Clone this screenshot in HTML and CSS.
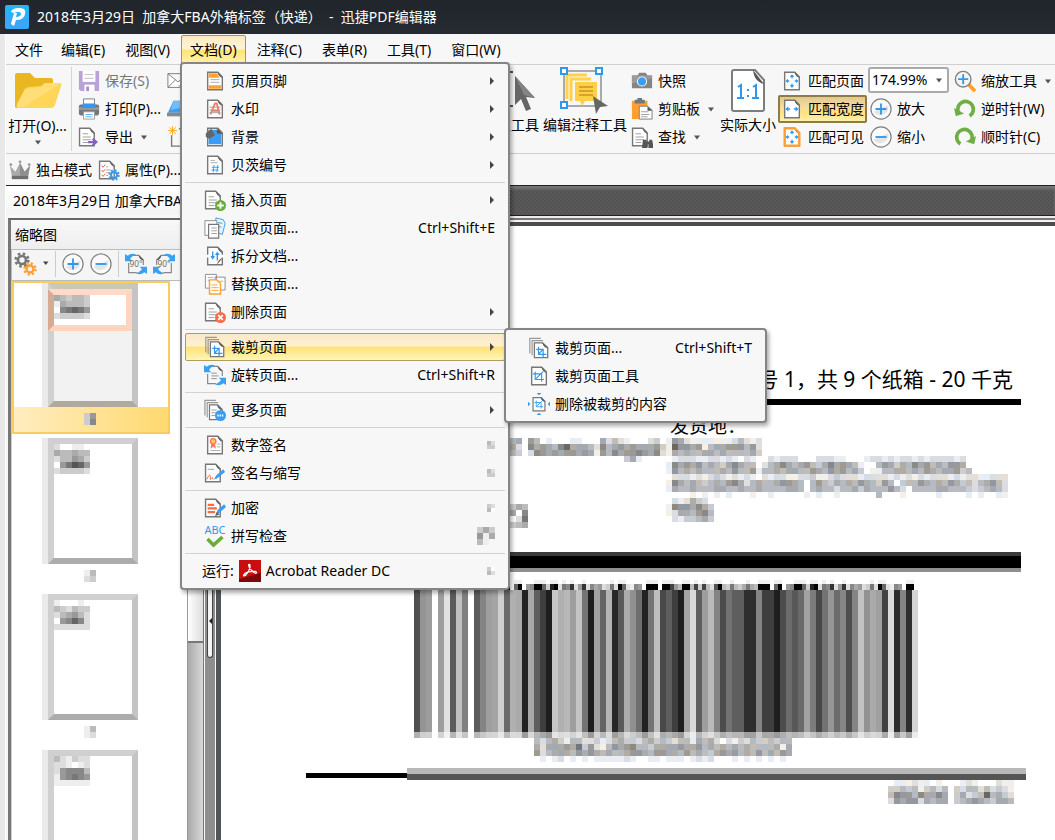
FILE: index.html
```html
<!DOCTYPE html>
<html lang="zh-CN">
<head>
<meta charset="utf-8">
<title>迅捷PDF编辑器</title>
<link rel="stylesheet" href="styles.css">
</head>
<body>
<svg class="defs" aria-hidden="true">
  <symbol id="page" viewBox="0 0 24 24"><path d="M4 2.500h11l5 5v14H4z" fill="#fff" stroke="#777" stroke-width="1.500"/><path d="M14.500 2l6 7c-3-1-5-3-6-7z" fill="#555"/></symbol>
  <symbol id="pageL" viewBox="0 0 24 24"><path d="M1.700 2.500h11l5 5v14h-16z" fill="#fff" stroke="#777" stroke-width="1.500"/><path d="M12.500 2l6 7c-3-1-5-3-6-7z" fill="#555"/><path d="M5 8.500h6M5 12h9M5 15h9M5 18h6" stroke="#999" fill="none"/></symbol>
  <symbol id="cropmark" viewBox="0 0 24 24"><path d="M9 8v10h11M6 11h11v10M10 17l9-9" stroke="#2f98ee" stroke-width="1.400" fill="none"/></symbol>
  <symbol id="croppages" viewBox="0 0 24 24"><path d="M2 18V1.500h12M4.500 20V4h12" fill="none" stroke="#999" stroke-width="1.300"/><path d="M7 6.500h9l5.500 5v11H7z" fill="#fff" stroke="#777" stroke-width="1.400"/><path d="M15.500 6l6 6c-3 0-5-2-6-6z" fill="#555"/><path d="M11.500 10.500v8.500H20M9 13.500h7.500V22M11.500 18.500l5-5" stroke="#2f98ee" stroke-width="1.300" fill="none"/></symbol>
  <symbol id="plus" viewBox="0 0 24 24"><circle cx="12" cy="12" r="11" fill="#fafafa" stroke="#808080" stroke-width="1.300"/><path d="M4 15a9 9 0 0 0 16-7z" fill="#e4e4e4"/><path d="M12 6v12M6 12h12" stroke="#2f98ee" stroke-width="2"/></symbol>
  <symbol id="minus" viewBox="0 0 24 24"><circle cx="12" cy="12" r="11" fill="#fafafa" stroke="#808080" stroke-width="1.300"/><path d="M4 15a9 9 0 0 0 16-7z" fill="#e4e4e4"/><path d="M6 12h12" stroke="#2f98ee" stroke-width="2"/></symbol>
  <symbol id="arrows4" viewBox="0 0 24 24"><path d="M12 9V6M12 15v3M9 12H6M15 12h3" stroke="#2f98ee" stroke-width="1.500"/><path d="M9.500 7.500L12 4.500l2.500 3zM9.500 16.500l2.500 3 2.500-3zM7.500 9.500v5L5 12zM16.500 9.500v5L19 12z" fill="#2f98ee"/></symbol>
  <symbol id="gear" viewBox="0 0 24 24"><circle cx="12" cy="12" r="6" fill="none" stroke="currentColor" stroke-width="4"/><circle cx="12" cy="12" r="9.500" fill="none" stroke="currentColor" stroke-width="4" stroke-dasharray="3.730 3.730"/></symbol>
  <symbol id="turn" viewBox="0 0 24 24"><path d="M5 16A8.500 8.500 0 1 1 17 19.500" fill="none" stroke="#6fae45" stroke-width="4"/><path d="M0 11l2 9 9-3z" fill="#6fae45"/></symbol>
  <symbol id="caret" viewBox="0 0 8 5"><path d="M1 .5h6L4 4.500z" fill="#555"/></symbol>
  <symbol id="next" viewBox="0 0 6 10"><path d="M1 1l4 4-4 4z" fill="#444"/></symbol>
  <symbol id="rot" viewBox="0 0 24 24"><path d="M4 11v10.500h9M9 2.500h6l5 5V13" fill="none" stroke="#888" stroke-width="1.300"/><path d="M14.500 2l6 6c-3 0-5-2-6-6z" fill="#555"/><path d="M0 1v8h8L5.500 6.500C7 4 9 3 12 2 9 0 5 1 3 3zM24 23v-8h-8l2.500 2.500C17 20 15 21 12 22c3 2 7 1 9-1z" fill="#3aa0f2"/></symbol>
</svg>

<header class="titlebar">
  <svg class="logo" viewBox="0 0 24 24"><rect width="24" height="24" rx="2" fill="#27b2ff"/><path d="M0 12h24v10l-2 2H2l-2-2z" fill="#3aa8f5"/><path d="M6 7c1-3 4-4 8-4 5 0 7 2 6 6-1 5-5 6-9 6l-2 6-3-2 1-4 2-7h3l-1 4c3 0 5-1 5-3 0-3-5-2-7-1z" fill="#fff"/></svg>
  <h1>2018年3月29日&nbsp; 加拿大FBA外箱标签（快递）&nbsp; - &nbsp;迅捷PDF编辑器</h1>
</header>

<div class="window">
  <nav class="menubar">
    <button>文件</button><button>编辑(E)</button><button>视图(V)</button><button class="open">文档(D)</button><button>注释(C)</button><button>表单(R)</button><button>工具(T)</button><button>窗口(W)</button>
  </nav>

  <div class="toolbar">
    <button class="big folder">
      <svg width="48" height="38" viewBox="0 0 48 38"><path d="M1 3q0-2 2-2h13l5 5h16q2 0 2 2v10L4 36q-3 1-3-2z" fill="#e9b820"/><path d="M11 17q1-2 4-2l12-1 4-3h15q2 0 1 3l-6 19q-1 3-4 3H4q-2 0-1-3z" fill="#ffd65a"/><path d="M47 11L10 35H4q-2 0-1-3l8-15 16-2 4-4z" fill="#ffde78"/></svg>
      <span>打开(O)...</span><svg class="caret"><use href="#caret"/></svg>
    </button>
    <div class="col files">
      <button class="off"><svg class="ic" viewBox="0 0 24 24"><path d="M1 1h22v22H3l-2-2z" fill="#b9a3d6"/><path d="M5 1h14v12H5z" fill="#fff"/><path d="M7 5h10M7 9h10" stroke="#bbb"/><path d="M7 16h11v7H7z" fill="#fff"/><path d="M9 18h3v5H9z" fill="#a98fca"/></svg>保存(S)</button>
      <button><svg class="ic" viewBox="0 0 24 24"><path d="M6 1h12v6H6z" fill="#fff" stroke="#777"/><rect x="1" y="7" width="22" height="12" rx="2" fill="#777"/><path d="M1 10h22v3H1z" fill="#999"/><path d="M5 6h14v5H5z" fill="#3598ec"/><path d="M6 15h12v8H6z" fill="#fff" stroke="#999"/><path d="M8 18h8M8 20.500h8" stroke="#5ab0f0"/></svg>打印(P)...</button>
      <button><svg class="ic" viewBox="0 0 24 24"><use href="#pageL"/><path d="M11 17.500h8M16 14l4 3.500-4 3.500" fill="none" stroke="#8560bd" stroke-width="2.500"/></svg>导出<svg class="caret"><use href="#caret"/></svg></button>
    </div>
    <div class="col extra">
      <button aria-label="邮件"><svg class="ic" viewBox="0 0 24 24"><path d="M1 4h22v15H1zl11 9L23 4M1 19l8-8M23 19l-8-8" fill="#fff" stroke="#777"/><path d="M12 17h8v6z" fill="#6aab3a"/></svg></button>
      <button aria-label="扫描"><svg class="ic" viewBox="0 0 24 24"><path d="M7 3h16v13H1z" fill="#3b9df0"/><path d="M7 3h16v6L4 13z" fill="#72bdf7"/><path d="M0 16h24v4H0z" fill="#888"/></svg></button>
      <button aria-label="新建"><svg class="ic" viewBox="0 0 24 24"><path d="M5 10v12h19M13 3h11" fill="none" stroke="#777" stroke-width="1.500"/><path d="M6 0v10M1 5h10M2.500 1.500l7 7M9.500 1.500l-7 7" stroke="#f6a623"/></svg></button>
    </div>
    <button class="big">
      <svg width="56" height="48" viewBox="0 0 56 48"><path d="M17 5h13M24 5v34M17 39h13" stroke="#555" stroke-width="2" fill="none"/><path d="M32 9l20 22-9-1 5 12-5 2-5-12-6 6z" fill="#666"/><path d="M32 9l20 22-11-3z" fill="#848484"/></svg>
      <span>选取工具</span>
    </button>
    <button class="big edit">
      <svg width="50" height="48" viewBox="0 0 50 48"><path d="M4 4h37v35H4z" fill="none" stroke="#aaa" stroke-width="2"/><path d="M7 32V8h20M11 34V12h20" fill="none" stroke="#ffd24a" stroke-width="3"/><path d="M15 15h22v19H25l-3 5-2-5h-5z" fill="#ffcf48"/><path d="M19 20h14M19 24h14M19 28h14" stroke="#c9971f" stroke-width="1.500"/><g fill="#fff" stroke="#2f98ee" stroke-width="2"><rect x="1" y="1" width="6" height="6"/><rect x="36" y="1" width="6" height="6"/><rect x="1" y="35" width="6" height="6"/></g><path d="M33 29l15 10-8 1-4 7z" fill="#666"/></svg>
      <span>编辑注释工具</span>
    </button>
    <div class="col clip">
      <button><svg class="ic" viewBox="0 0 24 24"><path d="M1 6h6l2-3h7l2 3h5v14H1z" fill="#848484"/><path d="M1 6h22v3L1 15z" fill="#9a9a9a"/><circle cx="12" cy="12.500" r="5.500" fill="#fff"/><circle cx="12" cy="12.500" r="4.500" fill="#3b9df0"/></svg>快照</button>
      <button><svg class="ic" viewBox="0 0 24 24"><path d="M1 3h17v20H1z" fill="#ff9f2e"/><path d="M4 2h11v4H4zM7 0h5v3H7z" fill="#777"/><path d="M9 9h9l5 4v10H9z" fill="#fff" stroke="#777"/><path d="M18 9l5 5h-5z" fill="#555"/><path d="M11 15h8M11 18h9M11 20.500h7" stroke="#999"/></svg>剪贴板<svg class="caret"><use href="#caret"/></svg></button>
      <button><svg class="ic" viewBox="0 0 24 24"><use href="#pageL"/><path d="M13 15h4v2h3v-2h3l2 9h-6v-4h-1v4h-6z" fill="#555"/></svg>查找<svg class="caret"><use href="#caret"/></svg></button>
    </div>
    <button class="big">
      <svg width="36" height="48" viewBox="0 0 36 48"><path d="M2 5q0-2 2-2h21l9 10v29q0 2-2 2H4q-2 0-2-2z" fill="#fff" stroke="#7d7d7d" stroke-width="2"/><path d="M23 3l11 14c-7-2-10-6-11-14z" fill="#555"/><path d="M8 20l3-2v13M7 31h7M23 20l3-2v13M22 31h7M18 22v2M18 28v2" stroke="#2f98ee" stroke-width="2" fill="none"/></svg>
      <span>实际大小</span>
    </button>
    <div class="col fit">
      <button><svg class="ic" viewBox="0 0 24 24"><use href="#page"/><use href="#arrows4"/></svg>匹配页面</button>
      <button class="on"><svg class="ic" viewBox="0 0 24 24"><use href="#page"/><path d="M6 12h4M14 12h4" stroke="#2f98ee" stroke-width="1.500"/><path d="M8 9v6l-3-3zM16 9v6l3-3z" fill="#2f98ee"/></svg>匹配宽度</button>
      <button><svg class="ic" viewBox="0 0 24 24"><use href="#page"/><path d="M4 2.500h11l5 5v14H4z" fill="none" stroke="#ff9f2e" stroke-width="2.500"/><use href="#arrows4"/></svg>匹配可见</button>
    </div>
    <div class="col zoom">
      <label class="combo"><select aria-label="缩放比例"><option>174.99%</option></select><svg class="caret"><use href="#caret"/></svg></label>
      <button><svg class="ic"><use href="#plus"/></svg>放大</button>
      <button><svg class="ic"><use href="#minus"/></svg>缩小</button>
    </div>
    <div class="col turn">
      <button><svg class="ic" viewBox="0 0 24 24"><path d="M16 16l7 7" stroke="#ff9f2e" stroke-width="4"/><circle cx="10" cy="10" r="8.500" fill="#f4f4f4" stroke="#808080" stroke-width="1.500"/><path d="M10 4.500v11M4.500 10h11" stroke="#2f98ee" stroke-width="2"/></svg>缩放工具<svg class="caret"><use href="#caret"/></svg></button>
      <button><svg class="ic"><use href="#turn"/></svg>逆时针(W)</button>
      <button><svg class="ic" viewBox="0 0 24 24"><g transform="matrix(-1 0 0 1 24 0)"><use href="#turn"/></g></svg>顺时针(C)</button>
    </div>
  </div>

  <div class="toolbar2">
    <button><svg class="ic" viewBox="0 0 24 24"><path d="M1 7l6 7 5-10 5 10 6-7-2 11H3z" fill="#aaa"/><path d="M12 4v14h9l2-11-6 7z" fill="#8e8e8e"/><path d="M3 18h18v4H3z" fill="#6e6e6e"/><circle cx="12" cy="3" r="1.500" fill="#999"/><circle cx="2" cy="6" r="1.500" fill="#999"/><circle cx="22" cy="6" r="1.500" fill="#999"/></svg>独占模式</button>
    <button><svg class="ic" viewBox="0 0 24 24"><use href="#pageL"/><path d="M4 6h5v14H4z" fill="#fff"/><path d="M4 7l1.500 2L8 6M4 12l1.500 2L8 11M4 17l1.500 2L8 16" stroke="#f0583a" fill="none"/><g color="#3598ec"><use href="#gear" x="11" y="11" width="13" height="13"/></g></svg>属性(P)...</button>
  </div>

  <div class="tabs"><button class="tab">2018年3月29日 加拿大FBA</button></div>

  <main class="work">
    <aside class="side">
      <div class="panel">
        <h2>缩略图</h2>
        <div class="tools">
          <button aria-label="选项"><svg width="36" height="24" viewBox="0 0 36 24"><g color="#777"><use href="#gear" x="1" y="0" width="16" height="16"/></g><g color="#ff9f2e"><use href="#gear" x="10" y="10" width="14" height="14"/></g><path d="M30 9.500h5.500l-2.700 3.500z" fill="#444"/></svg></button>
          <i></i>
          <button aria-label="放大"><svg class="ic"><use href="#plus"/></svg></button>
          <button aria-label="缩小"><svg class="ic"><use href="#minus"/></svg></button>
          <i></i>
          <button aria-label="逆时针旋转"><svg class="ic" viewBox="0 0 24 24"><use href="#rot"/><text x="5" y="15" class="deg">90°</text></svg></button>
          <button aria-label="顺时针旋转"><svg class="ic" viewBox="0 0 24 24"><g transform="matrix(-1 0 0 1 24 0)"><use href="#rot"/></g><text x="5" y="15" class="deg">90°</text></svg></button>
        </div>
        <div class="list">
          <div class="thumb sel"><div class="sheet"><div class="view"><svg class="mosaic" data-rows="abcbbc/eabbbc/f87679/dccccd"></svg></div></div><div class="cap"><svg class="mosaic" data-rows="c9/c8"></svg></div></div>
          <div class="thumb"><div class="sheet"><svg class="mosaic" data-rows="dffeef/abbabb/dbb9ac/f97569/dccccd"></svg></div><div class="cap"><svg class="mosaic" data-rows="eb/dc"></svg></div></div>
          <div class="thumb"><div class="sheet"><svg class="mosaic" data-rows="efffef/bcdbcc/dba9bd/f9868d/dddddd"></svg></div><div class="cap"><svg class="mosaic" data-rows="eb/ed"></svg></div></div>
          <div class="thumb"><div class="sheet"><svg class="mosaic" data-rows="bdecdd/ddefed/d9888b/e98789/eeeeee"></svg></div></div>
        </div>
      </div>
      <div class="scroll"><div class="grip"></div></div>
      <div class="split"><button aria-label="收起面板"><svg width="4" height="8" viewBox="0 0 4 8"><path d="M4 1L1 4l3 3z" fill="#222"/></svg></button></div>
    </aside>

    <article class="doc">
      <h3>号 1，共 9 个纸箱 - 20 千克</h3>
      <div class="addr">
        <div class="from">
          <svg class="mosaic" data-rows="7baf9bfefffeefffadbdefffdc/8adf8a9ab86aaabd8ba9a9aaa9c/9bcfd89a9a99a9ae9b8a9989a8d/ffffffffffffffffffffcae"></svg>
          <svg class="mosaic" data-rows="ccab/baf8/9fd7/ccba"></svg>
        </div>
        <div class="to">
          <p>发货地：</p>
          <svg class="mosaic" data-rows="e9adeeeeeeedbded/e699a9ebaa999b9d/eababbaababbbbac/fedddeeddedefdeffdedddfffdddeefffeddededdededddded/e8a9a9babca8abbfdba8aba9bca8a9abeffb9acab8a9bab99a/e9bababbbab9bb9ebbabaabb9ab9a9bac eebbaabab9abaa9cb/fdddededcdededefdeddeeddceedcdddeddddededededddededdeedddf/e8ababcbab98adbabba99abfb9bcabab9abc9bfcbb9abab9acbdba9bd/eabbabbbaabbabbabbbbaabfbabbdbbacabbb9bdfbbbbaabbbcdcbabd/ffffefefefefffeffefffffefeffefff ffbfffefffffeffffefeffeef/fdedacdf/e899a8ac/edaab98b/fdeccbac"></svg>
        </div>
      </div>
      <div class="bar"></div>
      <svg class="barcode" role="img" aria-label="条形码"></svg>
      <svg class="mosaic code" data-rows="bdbacebbddcedbaccdbacbcdbbeabadfdecdbccbcbb/adaaa9a7c9deb9a98bbcaaaa9aa9bababababbbbaea/9dbaaab9a9ababba99ab99aab9babca9a9bab9bab9a/fefedfefefeeeeedeffeefeeefededfffefefefefef"></svg>
      <div class="rule"></div>
      <svg class="mosaic foot" data-rows="feeedeefefffedefffdee/ccbcbecbdbfcdbbdbdcde/b899b8aa8afcadcb6bacd/d9a99dabaafcba9abcaab"></svg>
    </article>
  </main>

  <div class="menu doc-menu" role="menu">
    <button><svg class="ic" viewBox="0 0 24 24"><use href="#page"/><path d="M5 3.500h9l3 5H5zM5 16.500h14v4H5z" fill="#ffa22f"/><path d="M7 10.500h10M7 13.500h10" stroke="#aaa"/></svg>页眉页脚<svg class="next"><use href="#next"/></svg></button>
    <button><svg class="ic" viewBox="0 0 24 24"><use href="#page"/><path d="M7 18l5-12h2l3 12M8 14h8" stroke="#fa7a5f" stroke-width="2" fill="none"/><path d="M6 10h12M6 13h12M6 16h12" stroke="#999"/></svg>水印<svg class="next"><use href="#next"/></svg></button>
    <button><svg class="ic" viewBox="0 0 24 24"><use href="#page"/><path d="M5 4h9l5 5v11H5z" fill="#3a9df2"/><path d="M14 3l6 6-6-1z" fill="#555"/><path d="M2 8l6-5 4 7-6 4-4-2z" fill="#666"/></svg>背景<svg class="next"><use href="#next"/></svg></button>
    <button><svg class="ic" viewBox="0 0 24 24"><use href="#page"/><path d="M7 7h5M7 9.500h8" stroke="#aaa"/><path d="M11 12l-1 8M15 12l-1 8M8.500 14.500h8M8 17.500h8" stroke="#2f98ee"/></svg>贝茨编号<svg class="next"><use href="#next"/></svg></button>
    <hr>
    <button><svg class="ic" viewBox="0 0 24 24"><use href="#pageL"/><circle cx="18" cy="18" r="6" fill="#69ab3c"/><path d="M18 14.500v7M14.500 18h7" stroke="#fff" stroke-width="2"/></svg>插入页面<svg class="next"><use href="#next"/></svg></button>
    <button><svg class="ic" viewBox="0 0 24 24"><path d="M13 1l8 2 2 4-3 12-8-3z" fill="#e8f5ff" stroke="#2f98ee"/><path d="M15 6l5 1M14 10l5 1" stroke="#2f98ee"/><path d="M1 4h13v16H1z" fill="#fff" stroke="#888"/><path d="M5 8h11v15H5z" fill="#fff" stroke="#777" stroke-width="1.300"/><path d="M8 12h6M8 15h6M8 18h6" stroke="#999"/></svg>提取页面...<kbd>Ctrl+Shift+E</kbd></button>
    <button><svg class="ic" viewBox="0 0 24 24"><use href="#page"/><path d="M2 12h4M18 12h4" stroke="#fff" stroke-width="3"/><path d="M14 21.500l6-7c-3 1-5 3-6 7z" fill="#555"/><path d="M9.500 7v7M14.500 17v-8" stroke="#2f98ee" stroke-width="1.500"/><path d="M7 12h5l-2.500 4zM12 11h5l-2.500-4z" fill="#2f98ee"/></svg>拆分文档...</button>
    <button><svg class="ic" viewBox="0 0 24 24"><path d="M1.500 1.500h12v15h-12zM12 4.500h11v14H12z" fill="#fff" stroke="#888"/><path d="M4 5h6M4 8h6M15 9h6" stroke="#aaa"/><path d="M6 7.500h8l4 4V23H6z" fill="#fff" stroke="#ffa22f" stroke-width="1.600"/><path d="M8 13h7M8 16h8M8 19h8" stroke="#ffa22f"/></svg>替换页面...</button>
    <button><svg class="ic" viewBox="0 0 24 24"><use href="#pageL"/><circle cx="18" cy="18" r="6" fill="#fa6a43"/><path d="M15.500 15.500l5 5M20.500 15.500l-5 5" stroke="#fff" stroke-width="2"/></svg>删除页面<svg class="next"><use href="#next"/></svg></button>
    <hr>
    <button class="hot"><svg class="ic"><use href="#croppages"/></svg>裁剪页面<svg class="next"><use href="#next"/></svg></button>
    <button><svg class="ic" viewBox="0 0 24 24"><use href="#rot"/><path d="M8 10h6M8 13h8M8 16h6" stroke="#888"/></svg>旋转页面...<kbd>Ctrl+Shift+R</kbd></button>
    <hr>
    <button><svg class="ic" viewBox="0 0 24 24"><path d="M1 18V1.500h12M3.500 20V4h12" fill="none" stroke="#999" stroke-width="1.300"/><path d="M6 6.500h9l5 5v11H6z" fill="#fff" stroke="#777" stroke-width="1.300"/><path d="M14 6l6 6c-3 0-5-2-6-6z" fill="#555"/><path d="M8 12h6M8 15h6M8 18h4" stroke="#999"/><circle cx="18" cy="18" r="6" fill="#3a9df2"/><path d="M14.500 18h7" stroke="#fff" stroke-width="2" stroke-dasharray="1.500 1"/></svg>更多页面<svg class="next"><use href="#next"/></svg></button>
    <hr>
    <button><svg class="ic" viewBox="0 0 24 24"><use href="#page"/><circle cx="10" cy="8" r="3" fill="#ffc65c" stroke="#fa7a5f" stroke-width="1.500"/><path d="M8 11l-1 5 3-2 3 2-1-5z" fill="#fa7a5f"/><path d="M14 11h4M14 14h4M7 18h11" stroke="#aaa"/></svg>数字签名<svg class="mosaic tiny" data-rows="bd/cc"></svg></button>
    <button><svg class="ic" viewBox="0 0 24 24"><path d="M1.700 2.500h11l5 5v14h-16z" fill="#fff" stroke="#777" stroke-width="1.500"/><path d="M12.500 2l6 7c-3-1-5-3-6-7z" fill="#555"/><path d="M4 8h7" stroke="#999"/><path d="M3 19c2-5 4-6 4-3s-1 4 1 2 1-1 2 1" fill="none" stroke="#f0583a"/><path d="M11 19l2-4 8-7 2 3-9 7z" fill="#3a9df2"/></svg>签名与缩写<svg class="mosaic tiny" data-rows="bd/cc"></svg></button>
    <hr>
    <button><svg class="ic" viewBox="0 0 24 24"><path d="M1.700 2.500h11l5 5v14h-16z" fill="#fff" stroke="#777" stroke-width="1.500"/><path d="M12.500 2l6 7c-3-1-5-3-6-7z" fill="#555"/><path d="M4 8.500h7M4 12.500h10M4 16.500h8" stroke="#fa6a43" stroke-width="2.500"/><path d="M13 19l2-5 7-6 2 3-7 6z" fill="#3a9df2"/><path d="M12 21l2-5 3 3z" fill="#666"/></svg>加密<svg class="mosaic tiny" data-rows="cd/bf"></svg></button>
    <button><span class="spell"><span>ABC</span><svg width="18" height="12" viewBox="0 0 18 12"><path d="M1.500 3l6 6 9-8" stroke="#69ab3c" stroke-width="3.500" fill="none"/></svg></span>拼写检查<svg class="mosaic" data-rows="cac/9ea/be "></svg></button>
    <hr>
    <button class="run">运行: <svg class="ic" viewBox="0 0 24 24"><path d="M0 0h24v24H0z" fill="#7f0808"/><path d="M0 0h24v14L0 21z" fill="#c80f10"/><path d="M10.500 5q2-1 1.500 3-1 5-5 9-2 1-2-.5 1-2 5-3.500 4-1 8-.5 2 1 .5 2-2 0-4.500-3Q10 8 10.500 5z" fill="none" stroke="#fff" stroke-width="1.300"/></svg> Acrobat Reader DC<svg class="mosaic tiny" data-rows="cf/bd"></svg></button>
  </div>

  <div class="menu sub-menu" role="menu">
    <button><svg class="ic"><use href="#croppages"/></svg>裁剪页面...<kbd>Ctrl+Shift+T</kbd></button>
    <button><svg class="ic" viewBox="0 0 24 24"><use href="#page"/><use href="#cropmark" x="0" y="0" width="21" height="21"/></svg>裁剪页面工具</button>
    <button><svg class="ic" viewBox="0 0 24 24"><path d="M5.500 5h9l4 4v10.500h-13z" fill="#fff" stroke="#777" stroke-width="1.300"/><path d="M14 4.500l5 5c-3 0-5-2-5-5z" fill="#555"/><use href="#cropmark" x="3" y="3" width="16" height="16"/><path d="M9.500 0h5L12 2.500zM9.500 24h5L12 21.500zM0 9.500v5L2.500 12zM24 9.500v5L21.500 12z" fill="#2f98ee"/></svg>删除被裁剪的内容</button>
  </div>
</div>
<script src="app.js"></script>
</body>
</html>
```

FILE: styles.css
```css
* { box-sizing: border-box; }
body {
  margin: 0; height: 100vh; display: flex; flex-direction: column; overflow: hidden;
  font: 14px/20px "Noto Sans", "Noto Sans CJK SC", sans-serif; color: #000; background: #e8e8e8;
}
h1, h2, h3, p { margin: 0; font-weight: 400; font-size: 14px; }
button { font: inherit; color: inherit; background: none; border: 0; padding: 0; margin: 0; white-space: nowrap; }
svg { display: block; flex: none; }
.defs { position: absolute; width: 0; height: 0; }
.ic { width: 22px; height: 22px; }
.caret { width: 8px; height: 5px; margin-left: 4px; }

.titlebar { flex: none; height: 34px; display: flex; align-items: center; gap: 8px; padding-left: 5px; background: linear-gradient(#20242b, #262a31); color: #fff; }
.logo { width: 24px; height: 24px; }

.window { flex: 1; min-height: 0; display: flex; flex-direction: column; margin-left: 5px; background: #f7f7f7; border-left: 1px solid #fff; }
.menubar { flex: none; display: flex; height: 31px; padding-top: 1px; border-bottom: 1px solid #cfcfcf; }
.menubar button { padding: 0 10px; }
.menubar button:first-child { padding: 0 8px 0 9px; }
.menubar .open { padding: 0 8px; margin: 0 1px; border: 1px solid #a5935a; border-radius: 2px 2px 0 0; background: linear-gradient(#fbe9c4, #fff3d6 45%, #ffe476 55%, #fff3ae); }

.toolbar { flex: none; display: flex; height: 89px; padding-top: 2px; border-bottom: 1px solid #cfcfcf; overflow: hidden; }
.col { display: flex; flex-direction: column; flex: none; }
.col button { display: flex; align-items: center; gap: 5px; height: 28px; }
.col .caret { margin-left: 2px; }
.off { color: #777; }
.big { flex: none; display: flex; flex-direction: column; align-items: center; height: 84px; }
.big .caret { margin: 4px 0 0; }
.folder { width: 66px; padding: 5px 2px 0 0; border-right: 1px solid #d4d4d4; }
.folder span { margin-top: 6px; }
.files { width: 95px; padding-left: 6px; }
.extra { width: 316px; }
.edit { margin-left: 4px; }
.clip { width: 93px; padding-left: 4px; }
.fit { width: 89px; margin-left: 2px; }
.fit button { padding-left: 2px; border: 1px solid transparent; }
.fit .on { border: 2px solid #8f7b43; border-radius: 2px; padding-left: 1px; background: linear-gradient(#e0c98f, #f8dfa4 50%, #ffe07a 60%, #fff0b0); }
.zoom { width: 85px; padding-left: 3px; }
.combo { position: relative; width: 81px; height: 26px; margin: 0 0 2px -2px; }
.combo select { width: 100%; height: 26px; appearance: none; border: 2px solid #aaa; border-radius: 3px; background: #fff; font: inherit; padding: 0 0 0 2px; color: #000; }
.combo .caret { position: absolute; right: 6px; top: 11px; }
.turn { padding-left: 2px; }

.toolbar2 { flex: none; display: flex; align-items: center; gap: 6px; height: 31px; padding-left: 3px; }
.toolbar2 button { display: flex; align-items: center; gap: 5px; }

.tabs { flex: none; height: 30px; border-top: 1px solid #222; background: repeating-conic-gradient(#5a5a5a 0 25%, #525252 0 50%) 0 0 / 4px 4px; box-shadow: inset 0 3px 3px #777; }
.tab { height: 29px; padding: 0 30px 0 7px; background: linear-gradient(#fff, #f4f4f4); }

.work { flex: 1; min-height: 0; display: flex; }
.side { flex: none; display: flex; width: 210px; padding: 3px 0 0 2px; background: #f7f7f7; }
.panel { flex: none; width: 180px; border-top: 2px solid #666; border-left: 3px solid #777; background: #fff; display: flex; flex-direction: column; }
.panel h2 { height: 29px; padding: 5px 0 0 4px; background: linear-gradient(#f8f8f8, #eee); }
.tools { display: flex; align-items: center; height: 32px; gap: 6px; padding: 0 0 2px 1px; border: solid #bbb; border-width: 1px 0 1px 1px; background: #f5f5f5; }
.tools button { height: 24px; display: flex; align-items: center; }
.tools i { width: 1px; height: 26px; background: #ccc; }
.deg { font: 9px "Open Sans", sans-serif; fill: #666; }
.list { flex: 1; min-height: 0; overflow: hidden; border-left: 1px solid #ccc; }
.thumb { width: 158px; height: 156px; padding: 4px 0 0 36px; }
.sheet { width: 90px; height: 126px; border: 6px solid; border-color: #d0d0d0 #c4c4c4 #acacac #d0d0d0; box-shadow: -6px 0 #eaeaea; background: #fff; }
.cap { padding: 6px 0 0 36px; }
.sel { height: 153px; padding-top: 0; border: 2px solid #f6cd5e; padding-left: 34px; }
.sel .sheet { height: 124px; background: #f2f2f2; border-bottom-color: #b0aa9c; border-top-color: #cdc6b5; }
.view { width: 84px; height: 42px; margin-left: -6px; border: 6px solid; border-color: #ffdac8 #ffd4bf #ffd4bf #d6aa94; background: #fff; }
.sel .cap { margin-left: -34px; padding-left: 70px; height: 25px; background: linear-gradient(90deg, #ffedc0, #ffd970); }
.scroll { width: 17px; margin-left: -1px; background: linear-gradient(90deg, #aaa, #d8d8d8); border-right: 1px solid #777; border-left: 1px solid #999; }
.grip { height: 425px; background: linear-gradient(90deg, #fff, #ddd); border-bottom: 2px solid #777; }
.split { width: 10px; padding: 0 2px; background: #8e8e8e; margin-left: 1px; }
.split button { display: flex; align-items: flex-end; width: 100%; height: 440px; padding-bottom: 32px; background: #f4f4f4; border: 1px solid #444; border-top: 0; border-radius: 0 0 3px 3px; }

.doc { flex: 1; min-width: 0; overflow: hidden; padding: 0 34px 0 85px; background: linear-gradient(#222 0 1px, #f0eaf0 1px 3px, #777 3px 5px, #f4f4f4 5px 7px, #4c4c4c 7px 11px, transparent 11px), #fff; border-left: 5px solid #50555a; }
.doc h3 { margin-top: 145px; font-size: 21px; line-height: 39px; text-align: right; padding-right: 8px; border-bottom: 6px solid #000; white-space: nowrap; }
.addr { display: flex; height: 147px; padding-top: 9px; }
.from { width: 360px; padding: 24px 0 0 198px; display: flex; flex-direction: column; gap: 42px; }
.to p { font-size: 19px; line-height: 24px; padding-left: 4px; }
.bar { height: 20px; background: linear-gradient(#3a3a3a 0 4px, #000 4px 16px, #8e8e8e 16px); }
.barcode { width: 504px; height: 158px; margin: 8px 0 0 108px; }
.code { margin: 0 0 0 228px; }
.rule { height: 12px; margin: 6px -5px 0 0; background: linear-gradient(#fff 0 5px, #000 5px 10px, #fff 10px) 0 0 / 101px 12px no-repeat, linear-gradient(#b8b8b8 0 6px, #555 6px); }
.foot { margin: 0 7px 0 auto; }

.menu { position: absolute; display: flex; flex-direction: column; padding: 3px; border: 2px solid #858585; border-radius: 4px; background: #f7f7f7; box-shadow: 2px 3px 4px #0005; }
.menu button { display: flex; align-items: center; gap: 5px; height: 28px; padding: 0 9px 0 18px; border: 1px solid transparent; }
.menu button > :last-child:not(.ic) { margin-left: auto; }
.menu kbd { font: inherit; }
.menu hr { width: 100%; height: 1px; margin: 3px 0; border: 0; background: #d2d2d2; }
.menu .hot { border: 1px solid #b09c5c; border-radius: 2px; background: linear-gradient(#fbe9c8, #fff0cf 45%, #ffe27a 52%, #fff6b8); }
.menu .run { padding-left: 16px; }
.next { width: 6px; height: 10px; }
.doc-menu { top: 62px; left: 180px; width: 330px; }
.sub-menu { top: 328px; left: 504px; width: 263px; padding: 4px 4px 3px; }
.sub-menu button { padding: 0 8px 0 17px; }
.spell { width: 22px; height: 24px; display: flex; flex-direction: column; align-items: center; font-size: 11px; line-height: 12px; color: #2f98ee; }
```

FILE: app.js
```js
const NS = "http://www.w3.org/2000/svg";

function cell(svg, x, y, w, h, fill) {
  const r = document.createElementNS(NS, "rect");
  Object.entries({ x, y, width: w, height: h, fill }).forEach(([k, v]) => r.setAttribute(k, v));
  svg.appendChild(r);
}

// One hex digit per cell gives its lightness; a small tint alternates over the cells.
const tints = [[0, 0, 0], [8, 1, -8], [-9, 0, 9], [2, 2, 0], [-4, 0, 6]];
document.querySelectorAll(".mosaic").forEach(svg => {
  const size = svg.classList.contains("tiny") ? 4 : 6;
  const rows = svg.dataset.rows.split("/");
  svg.setAttribute("width", Math.max(...rows.map(r => r.length)) * size);
  svg.setAttribute("height", rows.length * size);
  svg.setAttribute("shape-rendering", "crispEdges");
  rows.forEach((row, y) => [...row].forEach((c, x) => {
    if (c === " ") return;
    const v = parseInt(c, 16) * 17;
    const t = v > 240 || rows.length < 6 && row.length < 7 ? tints[0] : tints[(x * 7 + y * 3 + x * y) % 5];
    cell(svg, x * size, y * size, size, size, `rgb(${t.map(d => Math.min(255, v + d))})`);
  }));
});

const bars = ("50949cff9ee25cc080ff5c849ea4cf6ab0aa22a85e3e1ec6b0b89ec4741ea264b4285aac906e2274be" +
  "485e3e1ea4d85e9eba844c725e5e2e2e843e3e1e4c6c586aa27c4872966c864e84c292aaa042dc2e842ed4").match(/../g);
const code = document.querySelector(".barcode");
code.setAttribute("shape-rendering", "crispEdges");
bars.forEach((b, i) => {
  const v = parseInt(b, 16);
  const soft = 255 - Math.round((255 - v) * 0.45);
  cell(code, i * 6, 10, 6, 142, `rgb(${v},${v},${v})`);
  cell(code, i * 6, 152, 6, 6, `rgb(${soft},${soft},${soft})`);
});
const tops = "908b0a0f906db0c4f7c9d480b06d0d56e0c8b29c0f7d0b70c80a3f7d0a90b340d";
for (let i = 0; i < 125; i++) {
  const c = tops[(i * 3) % tops.length];
  cell(code, i * 4, 4, 4, 6, `#${c}${c}${c}`);
  if (c < "8") cell(code, i * 4, 0, 4, 4, "#eee");
}
```
